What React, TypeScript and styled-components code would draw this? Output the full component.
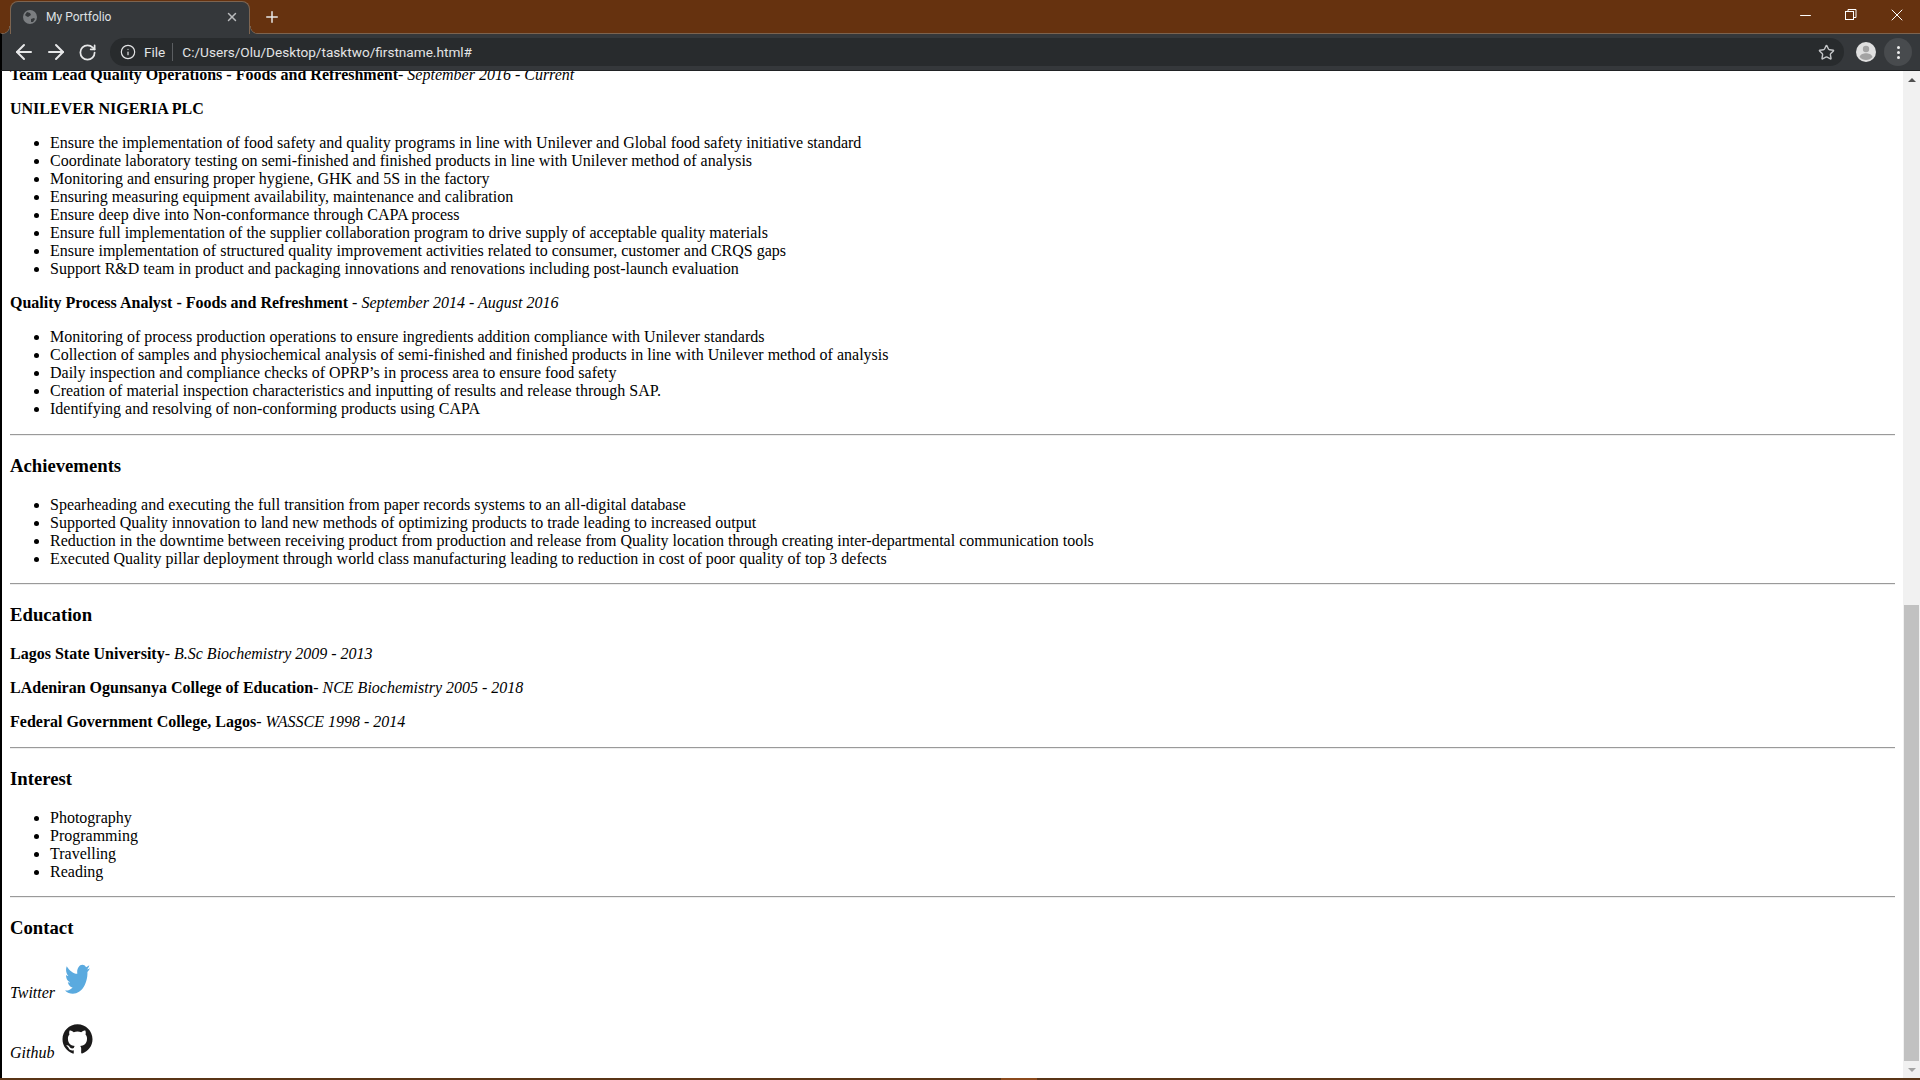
import React from 'react';
import styled, { createGlobalStyle } from 'styled-components';
import { ArrowLeft, ArrowRight, RotateCw, Info, Star, X, Plus, Minus } from 'lucide-react';
import { SiGithub } from 'react-icons/si';
import { FaTwitter } from 'react-icons/fa';

const GlobalStyle = createGlobalStyle`
  html, body {
    margin: 0;
    padding: 0;
    height: 100%;
    overflow: hidden;
    background: #fff;
  }
`;

const Frame = styled.div`
  width: 1920px;
  height: 1080px;
  display: flex;
  flex-direction: column;
  overflow: hidden;
  font-family: 'Liberation Serif', 'Times New Roman', serif;
`;

const TitleBar = styled.div`
  height: 33px;
  flex: none;
  display: flex;
  align-items: flex-end;
  background: #66320f;
  padding-left: 10px;
  color: #fff;
`;

const Tab = styled.div`
  position: relative;
  z-index: 1;
  width: 240px;
  height: 33px;
  margin-bottom: -1px;
  box-sizing: border-box;
  display: flex;
  align-items: center;
  padding: 0 10px 2px 11px;
  background: #35383b;
  border: 1px solid #7d6450;
  border-bottom: none;
  border-radius: 8px 8px 0 0;
  color: #dfe1e3;
  font: 12px Roboto, 'Noto Sans', sans-serif;

  &::before,
  &::after {
    content: '';
    position: absolute;
    bottom: 0;
    width: 8px;
    height: 8px;
  }
  &::before {
    left: -9px;
    background: radial-gradient(circle at 0 0, transparent 7px, #7d6450 7.5px, #35383b 8.5px);
  }
  &::after {
    right: -9px;
    background: radial-gradient(circle at 100% 0, transparent 7px, #7d6450 7.5px, #35383b 8.5px);
  }
`;

const TabTitle = styled.span`
  flex: 1;
  margin-left: 8px;
`;

const NewTab = styled.div`
  margin: 0 0 7px 13px;
  display: flex;
  color: #e8e8e8;
`;

const WindowControls = styled.div`
  margin-left: auto;
  align-self: flex-start;
  display: flex;
  height: 30px;
`;

const WindowButton = styled.div`
  width: 46px;
  display: flex;
  align-items: center;
  justify-content: center;
`;

const Toolbar = styled.div`
  height: 38px;
  flex: none;
  display: flex;
  align-items: center;
  box-sizing: border-box;
  background: #35383b;
  border-left: 2px solid #000;
  border-top: 1px solid #7d6450;
  border-bottom: 1px solid #202224;
  padding-left: 10px;
  color: #e6e7e8;
`;

const NavIcons = styled.div`
  display: flex;
  align-items: center;
  gap: 8px;
`;

const ReloadIcon = styled(RotateCw)`
  margin-left: 2px;
`;

const Omnibox = styled.div`
  margin-left: 13px;
  width: 1734px;
  height: 28px;
  box-sizing: border-box;
  display: flex;
  align-items: center;
  background: #282b2d;
  border-radius: 14px;
  padding: 0 9.5px 0 10px;
  font: 13.6px Roboto, 'Noto Sans', sans-serif;
  color: #e3e4e5;
`;

const SiteLabel = styled.span`
  margin-left: 8px;
  padding-right: 7px;
  border-right: 1px solid #5b5e61;
  line-height: 18px;
`;

const Address = styled.span`
  margin-left: 9px;
  flex: 1;
`;

const Avatar = styled.div`
  margin-left: 12px;
  width: 20px;
  height: 20px;
  display: flex;
`;

const MenuButton = styled.div`
  margin-left: 8px;
  width: 28px;
  height: 28px;
  border-radius: 50%;
  background: #484b4e;
  display: flex;
  flex-direction: column;
  align-items: center;
  justify-content: center;
  gap: 2px;
`;

const MenuDot = styled.i`
  width: 3px;
  height: 3px;
  background: #eee;
  border-radius: 50%;
`;

const Viewport = styled.div`
  flex: 1;
  min-height: 0;
  display: flex;
  border-left: 2px solid #000;
  background: #fff;
`;

const Page = styled.main`
  flex: 1;
  min-width: 0;
  overflow: hidden;
  padding: 0 8px;
  font-size: 16px;
  line-height: 18px;
  color: #000;
`;

const Scrolled = styled.div`
  margin-top: -5px;
`;

const Para = styled.p`
  margin: 16px 0;
  &:first-child {
    margin-top: 0;
  }
`;

const Rule = styled.hr`
  margin: 8px 0;
  border: none;
  border-top: 1px solid #9a9a9a;
  border-bottom: 1px solid #eeeeee;
`;

const Heading = styled.h3`
  margin: 18.72px 0;
  font-size: 18.72px;
  line-height: 22px;
`;

const List = styled.ul`
  margin: 16px 0;
  padding-left: 40px;

  ${Heading} + & {
    margin-top: 19.5px;
    margin-bottom: 15.22px;
  }
`;

const ContactRow = styled.p`
  margin: 16px 0;
  font-style: italic;
`;

const TwitterIcon = styled(FaTwitter)`
  box-sizing: border-box;
  width: 25px;
  height: 40px;
  padding: 3.5px 0 1px;
  margin-left: 10px;
  color: #5aaadf;
  vertical-align: baseline;
`;

const GithubIcon = styled(SiGithub)`
  box-sizing: border-box;
  width: 31px;
  height: 40px;
  padding: 6px 0 4px;
  margin-left: 8px;
  color: #1b1a1a;
  vertical-align: baseline;
`;

const ScrollTrack = styled.div`
  width: 17px;
  flex: none;
  display: flex;
  flex-direction: column;
  align-items: center;
  background: #f1f1f1;
`;

const Arrow = styled.div<{ $down?: boolean; $dim?: boolean }>`
  height: 17px;
  flex: none;
  display: flex;
  align-items: center;
  justify-content: center;
  &::before {
    content: '';
    border-left: 4px solid transparent;
    border-right: 4px solid transparent;
    ${(p) => (p.$down ? 'border-top' : 'border-bottom')}: 4px solid ${(p) => (p.$dim ? '#a3a3a3' : '#505050')};
  }
`;

const ThumbSpace = styled.div`
  flex: 1;
  width: 100%;
  display: flex;
  flex-direction: column;
  justify-content: flex-end;
`;

const Thumb = styled.div`
  height: 456px;
  margin: 0 1px;
  background: #c1c1c1;
`;

const BottomEdge = styled.div`
  height: 2px;
  flex: none;
  display: flex;
  background: #5a3517;
`;

const EdgeGlow = styled.div`
  width: 36px;
  margin-left: 1001px;
  background: #8b4a1c;
`;

const workItems = [
  'Ensure the implementation of food safety and quality programs in line with Unilever and Global food safety initiative standard',
  'Coordinate laboratory testing on semi-finished and finished products in line with Unilever method of analysis',
  'Monitoring and ensuring proper hygiene, GHK and 5S in the factory',
  'Ensuring measuring equipment availability, maintenance and calibration',
  'Ensure deep dive into Non-conformance through CAPA process',
  'Ensure full implementation of the supplier collaboration program to drive supply of acceptable quality materials',
  'Ensure implementation of structured quality improvement activities related to consumer, customer and CRQS gaps',
  'Support R&D team in product and packaging innovations and renovations including post-launch evaluation',
];

const analystItems = [
  'Monitoring of process production operations to ensure ingredients addition compliance with Unilever standards',
  'Collection of samples and physiochemical analysis of semi-finished and finished products in line with Unilever method of analysis',
  'Daily inspection and compliance checks of OPRP’s in process area to ensure food safety',
  'Creation of material inspection characteristics and inputting of results and release through SAP.',
  'Identifying and resolving of non-conforming products using CAPA',
];

const achievements = [
  'Spearheading and executing the full transition from paper records systems to an all-digital database',
  'Supported Quality innovation to land new methods of optimizing products to trade leading to increased output',
  'Reduction in the downtime between receiving product from production and release from Quality location through creating inter-departmental communication tools',
  'Executed Quality pillar deployment through world class manufacturing leading to reduction in cost of poor quality of top 3 defects',
];

const interests = ['Photography', 'Programming', 'Travelling', 'Reading'];

const renderList = (items: string[]) => (
  <List>
    {items.map((item) => (
      <li key={item}>{item}</li>
    ))}
  </List>
);

const App: React.FC = () => {
  return (
    <Frame>
      <GlobalStyle />
      <TitleBar>
        <Tab>
          <svg width="16" height="16" viewBox="0 0 16 16">
            <circle cx="8" cy="8" r="7" fill="#7b7e81" />
            <path d="M5 3l3 1 1 2-3 2-2-1-1-1zM9 10l3-1 1 1-2 3-2 0z" fill="#35383b" />
          </svg>
          <TabTitle>My Portfolio</TabTitle>
          <X size={14} color="#b9bbbd" strokeWidth={2.5} />
        </Tab>
        <NewTab>
          <Plus size={18} strokeWidth={2} />
        </NewTab>
        <WindowControls>
          <WindowButton>
            <Minus size={17} strokeWidth={1.4} />
          </WindowButton>
          <WindowButton>
            <svg width="12" height="12" viewBox="0 0 12 12" fill="none" stroke="#fff" strokeWidth="1">
              <rect x="0.5" y="2.5" width="8" height="8" />
              <path d="M3 2.500V.5h8v8H8.500" />
            </svg>
          </WindowButton>
          <WindowButton>
            <X size={20} strokeWidth={1.2} />
          </WindowButton>
        </WindowControls>
      </TitleBar>
      <Toolbar>
        <NavIcons>
          <ArrowLeft size={24} strokeWidth={2} />
          <ArrowRight size={24} strokeWidth={2} />
          <ReloadIcon size={19} strokeWidth={2.2} />
        </NavIcons>
        <Omnibox>
          <Info size={16} strokeWidth={1.8} />
          <SiteLabel>File</SiteLabel>
          <Address>C:/Users/Olu/Desktop/tasktwo/firstname.html#</Address>
          <Star size={17} strokeWidth={2} color="#c4c6c8" />
        </Omnibox>
        <Avatar>
          <svg width="20" height="20" viewBox="0 0 20 20">
            <circle cx="10" cy="10" r="10" fill="#e0e0e0" />
            <circle cx="10" cy="7" r="3.2" fill="#a3a3a3" />
            <path d="M3.500 15c1-3 4-3.800 6.500-3.800s5.500.8 6.500 3.800c-1.500 2-4 3-6.500 3s-5-1-6.500-3z" fill="#a3a3a3" />
          </svg>
        </Avatar>
        <MenuButton>
          <MenuDot />
          <MenuDot />
          <MenuDot />
        </MenuButton>
      </Toolbar>
      <Viewport>
        <Page>
          <Scrolled>
            <Para>
              <b>Team Lead Quality Operations - Foods and Refreshment</b>- <i>September 2016 - Current</i>
            </Para>
            <Para>
              <b>UNILEVER NIGERIA PLC</b>
            </Para>
            {renderList(workItems)}
            <Para>
              <b>Quality Process Analyst - Foods and Refreshment</b> - <i>September 2014 - August 2016</i>
            </Para>
            {renderList(analystItems)}
            <Rule />
            <Heading>Achievements</Heading>
            {renderList(achievements)}
            <Rule />
            <Heading>Education</Heading>
            <Para>
              <b>Lagos State University</b>- <i>B.Sc Biochemistry 2009 - 2013</i>
            </Para>
            <Para>
              <b>LAdeniran Ogunsanya College of Education</b>- <i>NCE Biochemistry 2005 - 2018</i>
            </Para>
            <Para>
              <b>Federal Government College, Lagos</b>- <i>WASSCE 1998 - 2014</i>
            </Para>
            <Rule />
            <Heading>Interest</Heading>
            {renderList(interests)}
            <Rule />
            <Heading>Contact</Heading>
            <ContactRow>
              Twitter
              <TwitterIcon preserveAspectRatio="none" />
            </ContactRow>
            <ContactRow>
              Github
              <GithubIcon />
            </ContactRow>
          </Scrolled>
        </Page>
        <ScrollTrack>
          <Arrow />
          <ThumbSpace>
            <Thumb />
          </ThumbSpace>
          <Arrow $down $dim />
        </ScrollTrack>
      </Viewport>
      <BottomEdge>
        <EdgeGlow />
      </BottomEdge>
    </Frame>
  );
};

export default App;
